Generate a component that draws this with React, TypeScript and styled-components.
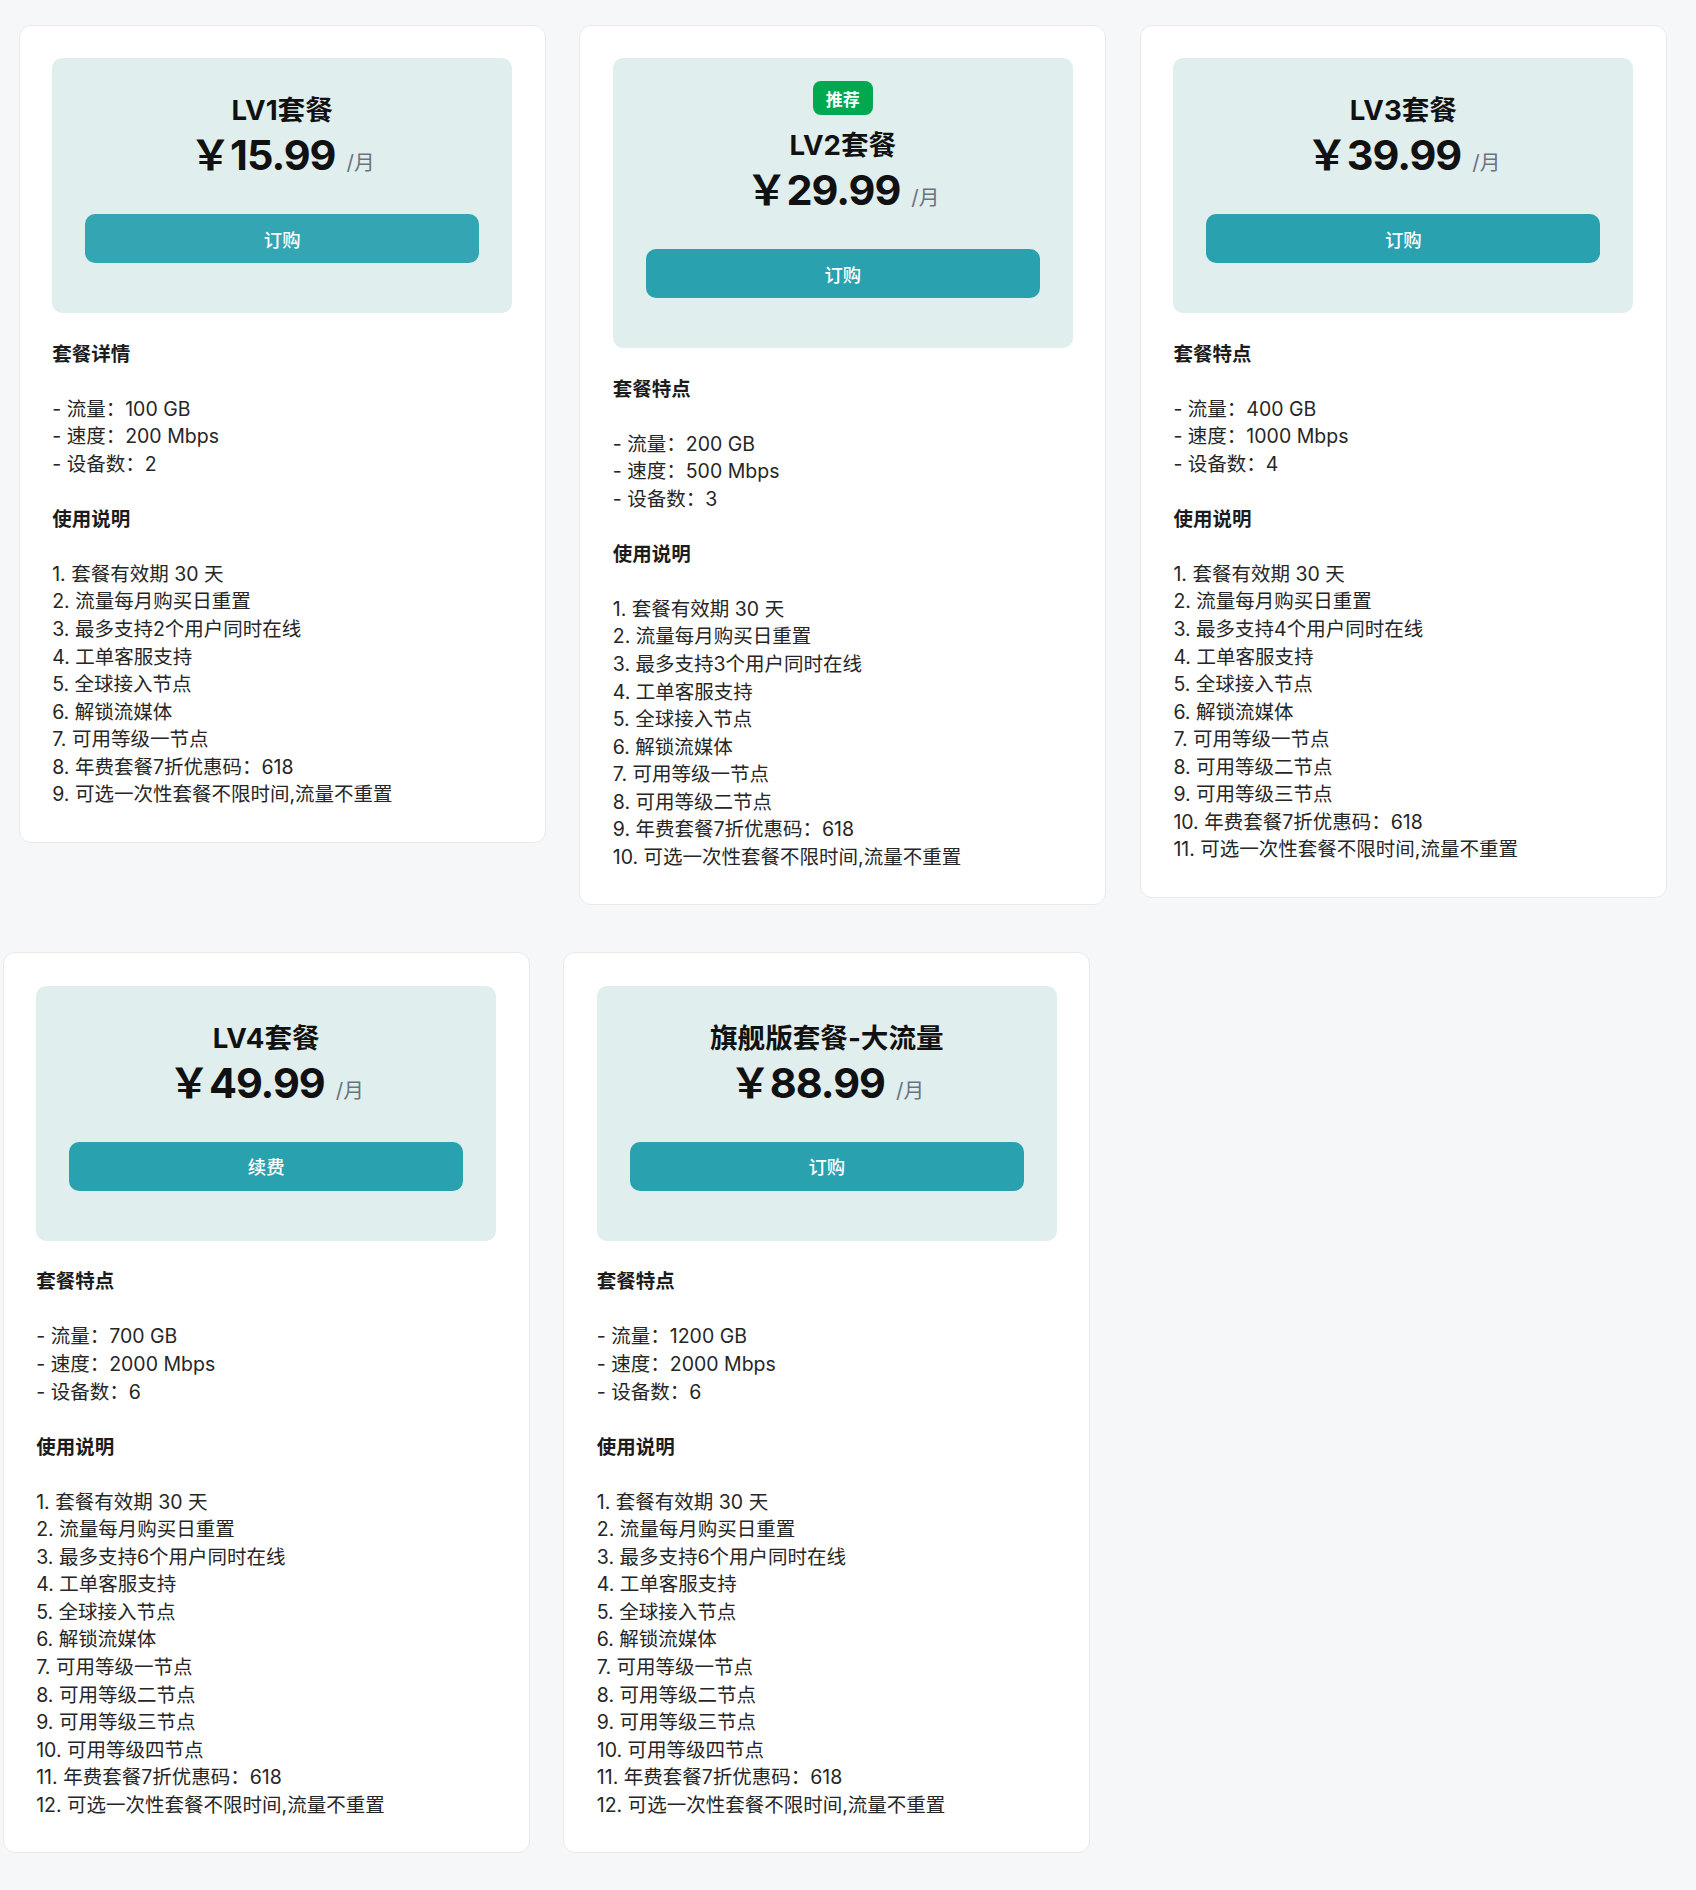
import React from 'react';
import styled, { createGlobalStyle } from 'styled-components';

const GlobalStyle = createGlobalStyle`
  html, body {
    margin: 0;
    padding: 0;
    background: #f6f7f9;
  }
  body {
    font-family: Inter, "Noto Sans CJK SC", sans-serif;
    color: #222;
  }
  * { box-sizing: border-box; }
`;

const Page = styled.div`
  min-height: 1890px;
  padding-top: 24.5px;
  display: flex;
  flex-direction: column;
  gap: 47px;
`;

const Row = styled.div<{ $offset: number }>`
  display: flex;
  align-items: flex-start;
  gap: 33.6px;
  padding-left: ${(p) => p.$offset}px;
`;

const Card = styled.div`
  flex: none;
  width: 527px;
  background: #ffffff;
  border: 1px solid #e7e9ec;
  border-radius: 12px;
  padding: 32.5px 32.5px 33px;
`;

const Panel = styled.div`
  background: #e0eeed;
  border-radius: 10px;
  padding: 33px 33px 50px;
  display: flex;
  flex-direction: column;
  align-items: center;
`;

const Badge = styled.span`
  display: inline-flex;
  align-items: center;
  justify-content: center;
  height: 34px;
  padding: 0 13px;
  margin: -10px 0 11px;
  border-radius: 8px;
  background: #00a84f;
  color: #ffffff;
  font-size: 17px;
  font-weight: 700;
`;

const Title = styled.h3`
  margin: 0;
  font-size: 27.6px;
  line-height: 38px;
  font-weight: 700;
  color: #111;
`;

const PriceRow = styled.div`
  display: flex;
  align-items: baseline;
  line-height: 52px;
  white-space: nowrap;
`;

const Amount = styled.span`
  font-size: 41.4px;
  font-weight: 700;
  letter-spacing: -1px;
  color: #111;
`;

const Unit = styled.span`
  margin-left: 11px;
  font-size: 20.7px;
  color: #6b7280;
`;

const ActionButton = styled.button<{ $light?: boolean }>`
  width: 100%;
  height: 49px;
  margin-top: 25px;
  border: 0;
  border-radius: 10px;
  background: ${(p) => (p.$light ? '#34a5b3' : '#2aa1af')};
  color: #ffffff;
  font-family: inherit;
  font-size: 18.4px;
  font-weight: 500;
  cursor: pointer;
`;

const Details = styled.div`
  margin-top: 27.5px;
  font-size: 19.5px;
  line-height: 27.55px;
  color: #262626;
`;

const SectionTitle = styled.div`
  font-weight: 700;
  color: #1c1c1c;
  margin-bottom: 27.55px;
`;

const Block = styled.div`
  margin-bottom: 27.55px;
  &:last-child {
    margin-bottom: 0;
  }
`;

const Line = styled.div`
  white-space: nowrap;
`;

type Plan = {
  name: string;
  price: string;
  action: string;
  featureTitle: string;
  traffic: string;
  speed: string;
  devices: number;
  levels: number;
  recommended?: boolean;
  light?: boolean;
};

const levelNames = ['一', '二', '三', '四'];

function buildItems(plan: Plan): string[] {
  const items = [
    '套餐有效期 30 天',
    '流量每月购买日重置',
    `最多支持${plan.devices}个用户同时在线`,
    '工单客服支持',
    '全球接入节点',
    '解锁流媒体',
  ];
  for (let i = 0; i < plan.levels; i++) {
    items.push(`可用等级${levelNames[i]}节点`);
  }
  items.push('年费套餐7折优惠码：618');
  items.push('可选一次性套餐不限时间,流量不重置');
  return items.map((t, i) => `${i + 1}. ${t}`);
}

const rowOne: Plan[] = [
  { name: 'LV1套餐', price: '15.99', action: '订购', featureTitle: '套餐详情', traffic: '100 GB', speed: '200 Mbps', devices: 2, levels: 1, light: true },
  { name: 'LV2套餐', price: '29.99', action: '订购', featureTitle: '套餐特点', traffic: '200 GB', speed: '500 Mbps', devices: 3, levels: 2, recommended: true },
  { name: 'LV3套餐', price: '39.99', action: '订购', featureTitle: '套餐特点', traffic: '400 GB', speed: '1000 Mbps', devices: 4, levels: 3 },
];

const rowTwo: Plan[] = [
  { name: 'LV4套餐', price: '49.99', action: '续费', featureTitle: '套餐特点', traffic: '700 GB', speed: '2000 Mbps', devices: 6, levels: 4 },
  { name: '旗舰版套餐-大流量', price: '88.99', action: '订购', featureTitle: '套餐特点', traffic: '1200 GB', speed: '2000 Mbps', devices: 6, levels: 4 },
];

function PlanCard({ plan }: { plan: Plan }) {
  return (
    <Card>
      <Panel>
        {plan.recommended && <Badge>推荐</Badge>}
        <Title>{plan.name}</Title>
        <PriceRow>
          <Amount>￥{plan.price}</Amount>
          <Unit>/月</Unit>
        </PriceRow>
        <ActionButton $light={plan.light}>{plan.action}</ActionButton>
      </Panel>
      <Details>
        <SectionTitle>{plan.featureTitle}</SectionTitle>
        <Block>
          <Line>- 流量：{plan.traffic}</Line>
          <Line>- 速度：{plan.speed}</Line>
          <Line>- 设备数：{plan.devices}</Line>
        </Block>
        <SectionTitle>使用说明</SectionTitle>
        <Block>
          {buildItems(plan).map((t) => (
            <Line key={t}>{t}</Line>
          ))}
        </Block>
      </Details>
    </Card>
  );
}

export default function App() {
  return (
    <>
      <GlobalStyle />
      <Page>
        <Row $offset={18.7}>
          {rowOne.map((p) => (
            <PlanCard key={p.name} plan={p} />
          ))}
        </Row>
        <Row $offset={2.7}>
          {rowTwo.map((p) => (
            <PlanCard key={p.name} plan={p} />
          ))}
        </Row>
      </Page>
    </>
  );
}
